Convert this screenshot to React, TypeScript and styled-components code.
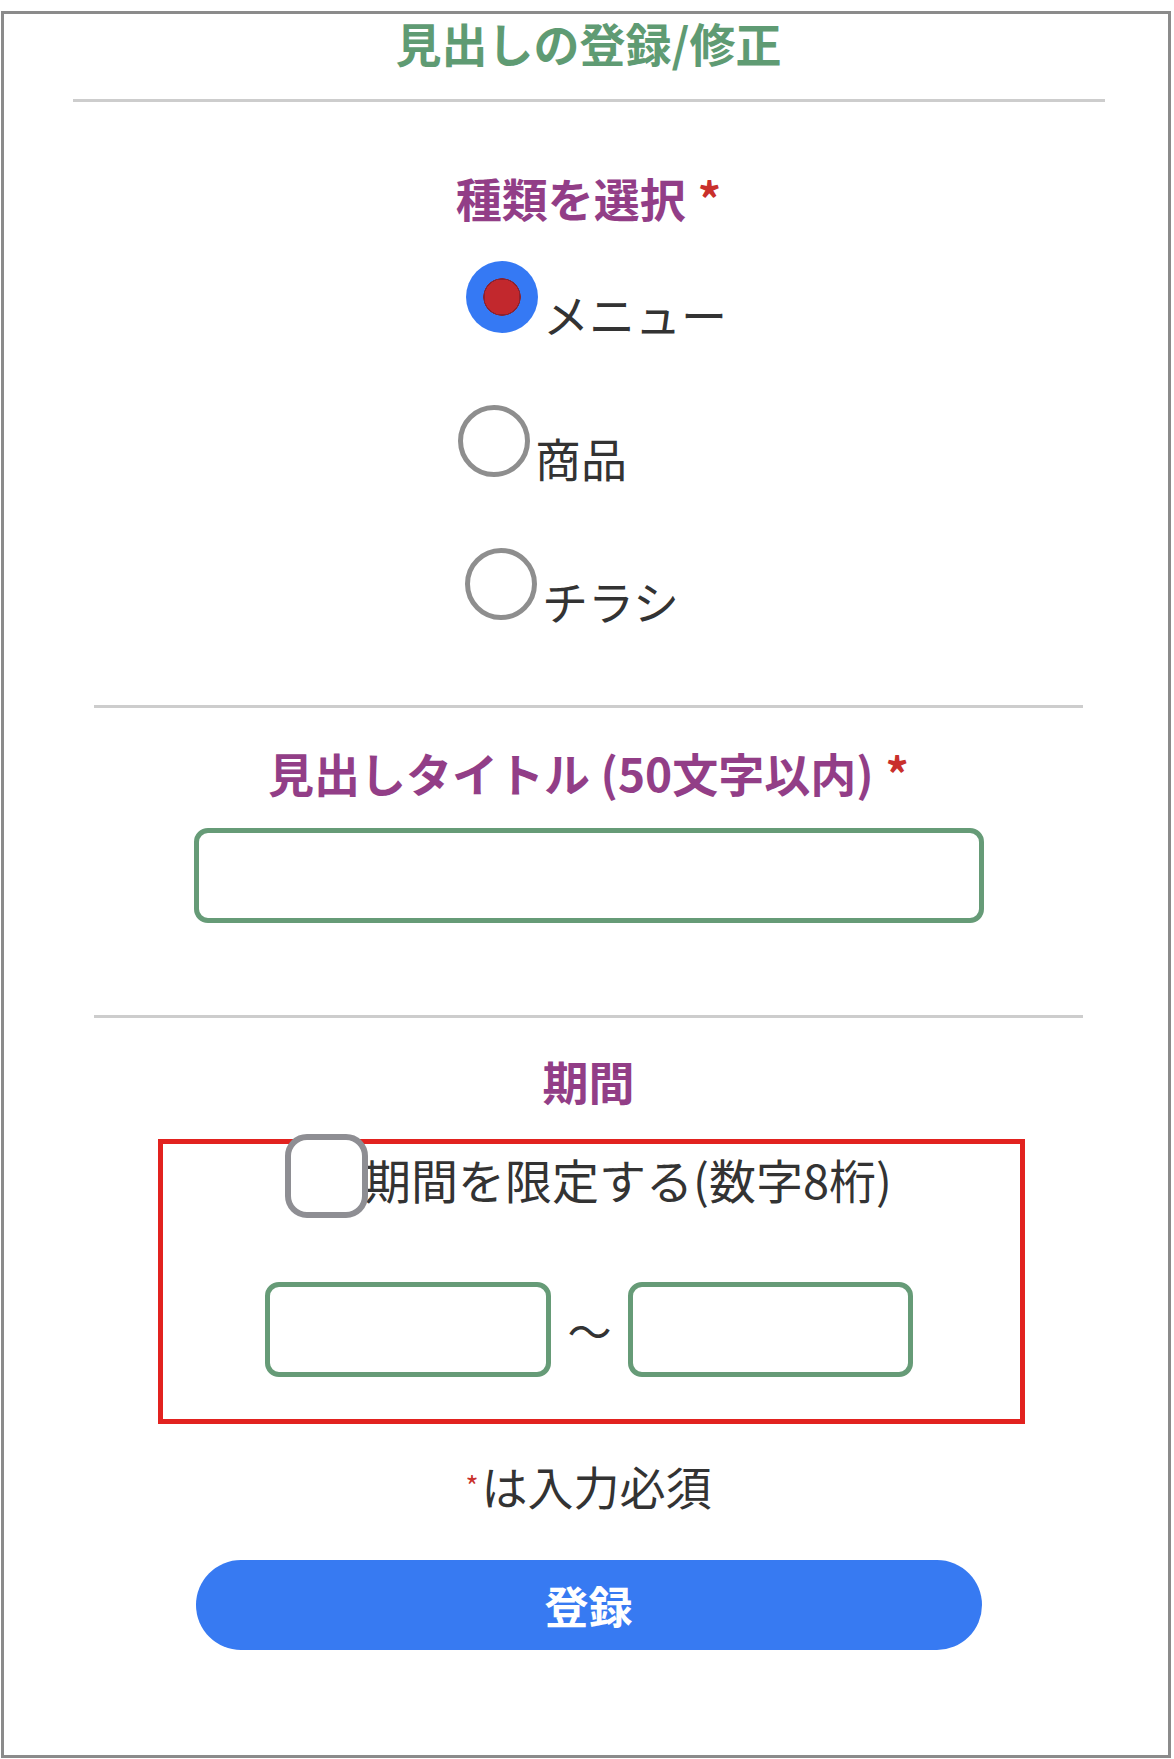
import React, { useState } from "react";
import styled, { createGlobalStyle } from "styled-components";

const GlobalStyle = createGlobalStyle`
  html, body {
    margin: 0;
    padding: 0;
    background: #fff;
  }
  body {
    font-family: "Noto Sans CJK JP", "Noto Sans", sans-serif;
    color: #333;
  }
  * {
    box-sizing: border-box;
  }
`;

const Frame = styled.div`
  width: 1170px;
  margin: 11px 0 1px 1px;
  padding: 0 0 105px 5px;
  border: 3px solid #8b8b8b;
  display: flex;
  flex-direction: column;
`;

const Title = styled.h1`
  margin: 0;
  font-size: 46px;
  line-height: 56px;
  font-weight: 700;
  color: #5f9b73;
  text-align: center;
`;

const Rule = styled.hr<{ $width: number; $top: number }>`
  width: ${(p) => p.$width}px;
  height: 3px;
  margin: ${(p) => p.$top}px auto 0;
  border: none;
  background: #cdcdcd;
`;

const Heading = styled.h2<{ $top: number }>`
  margin: ${(p) => p.$top}px 0 0;
  font-size: 46px;
  line-height: 56px;
  font-weight: 700;
  color: #923e87;
  text-align: center;
`;

const Required = styled.span`
  color: #c9302c;
  margin-left: 12px;
`;

const RadioGroup = styled.div`
  margin-top: 36px;
  display: flex;
  flex-direction: column;
  align-items: flex-start;
  gap: 63.5px;
`;

const RadioRow = styled.label<{ $indent: number }>`
  display: flex;
  align-items: flex-start;
  gap: 5px;
  margin-left: ${(p) => p.$indent}px;
  cursor: pointer;
`;

const RadioInput = styled.input`
  appearance: none;
  width: 72px;
  height: 72px;
  margin: 0;
  border: 5px solid #8e8e8e;
  border-radius: 50%;
  background: #fff;
  flex-shrink: 0;

  &:checked {
    border: none;
    background: radial-gradient(
      circle,
      #c2282d 0 17.5px,
      #8c2230 17.5px 18.5px,
      #3579f4 19px
    );
  }
`;

const RadioText = styled.span`
  margin-top: 24px;
  font-size: 46px;
  line-height: 56px;
  color: #333;
`;

const TextField = styled.input<{ $width: number }>`
  width: ${(p) => p.$width}px;
  height: 95px;
  border: 5px solid #669b77;
  border-radius: 14px;
  background: #fff;
  font-size: 40px;
  padding: 0 16px;
  font-family: inherit;
  outline: none;
`;

const TitleField = styled(TextField)`
  margin: 28px auto 0;
`;

const PeriodBox = styled.div`
  width: 867px;
  margin: 31px 0 0 149px;
  padding: 0 0 42px;
  border: 5px solid #e2221f;
  display: flex;
  flex-direction: column;
  align-items: flex-start;
  gap: 64px;
`;

const CheckRow = styled.label`
  margin: -10px 0 0 122px;
  display: flex;
  align-items: flex-start;
  cursor: pointer;
`;

const CheckInput = styled.input`
  appearance: none;
  width: 83px;
  height: 84px;
  margin: 0;
  border: 6px solid #8e8e93;
  border-radius: 22px;
  background: #fff;
  flex-shrink: 0;
  position: relative;
  z-index: 1;
`;

const CheckText = styled.span`
  margin: 17px 0 0 -4px;
  font-size: 47px;
  line-height: 56px;
  color: #333;
`;

const DateRow = styled.div`
  margin-left: 102px;
  display: flex;
  align-items: center;
`;

const Tilde = styled.span`
  width: 77px;
  text-align: center;
  font-size: 44px;
  line-height: 56px;
  color: #333;
`;

const Note = styled.p`
  margin: 33px 0 0;
  font-size: 46px;
  line-height: 56px;
  text-align: center;
  color: #333;
`;

const NoteMark = styled.span`
  font-size: 28px;
  color: #c9302c;
  vertical-align: 8px;
  margin-right: 3px;
`;

const SubmitButton = styled.button`
  width: 786px;
  height: 90px;
  margin: 47px auto 0;
  border: none;
  border-radius: 45px;
  background: #377af2;
  color: #fff;
  font-family: inherit;
  font-size: 44px;
  font-weight: 700;
  display: flex;
  align-items: center;
  justify-content: center;
  cursor: pointer;
`;

const kinds = [
  { value: "menu", label: "メニュー", indent: 457 },
  { value: "item", label: "商品", indent: 449 },
  { value: "flyer", label: "チラシ", indent: 456 },
];

const App = () => {
  const [kind, setKind] = useState<string>("menu");
  const [limited, setLimited] = useState<boolean>(false);

  return (
    <>
      <GlobalStyle />
      <Frame>
        <Title>見出しの登録/修正</Title>
        <Rule $width={1032} $top={29} />

        <Heading $top={67}>
          種類を選択<Required>*</Required>
        </Heading>
        <RadioGroup>
          {kinds.map((k) => (
            <RadioRow key={k.value} $indent={k.indent}>
              <RadioInput
                type="radio"
                name="kind"
                value={k.value}
                checked={kind === k.value}
                onChange={() => setKind(k.value)}
              />
              <RadioText>{k.label}</RadioText>
            </RadioRow>
          ))}
        </RadioGroup>
        <Rule $width={989} $top={77} />

        <Heading $top={36}>
          見出しタイトル (50文字以内)<Required>*</Required>
        </Heading>
        <TitleField $width={790} type="text" />
        <Rule $width={989} $top={92} />

        <Heading $top={34}>期間</Heading>
        <PeriodBox>
          <CheckRow>
            <CheckInput
              type="checkbox"
              checked={limited}
              onChange={(e) => setLimited(e.target.checked)}
            />
            <CheckText>期間を限定する(数字8桁)</CheckText>
          </CheckRow>
          <DateRow>
            <TextField $width={286} type="text" />
            <Tilde>〜</Tilde>
            <TextField $width={285} type="text" />
          </DateRow>
        </PeriodBox>

        <Note>
          <NoteMark>*</NoteMark>は入力必須
        </Note>
        <SubmitButton type="button">登録</SubmitButton>
      </Frame>
    </>
  );
};

export default App;
